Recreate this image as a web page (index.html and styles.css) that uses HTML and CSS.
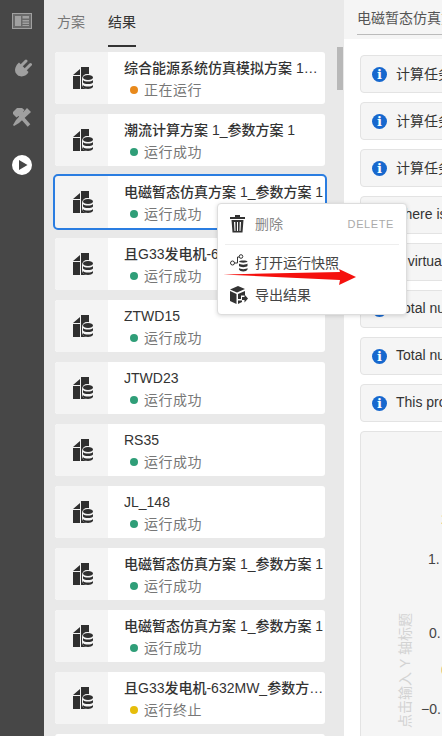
FILE: index.html
```html
<!DOCTYPE html>
<html lang="en">

<head>
    <meta charset="UTF-8">
    <meta name="viewport" content="width=device-width, initial-scale=1.0">
    <title>results</title>
    <link rel="stylesheet" href="styles.css">
</head>

<body>
    <svg class="defs" width="0" height="0">
        <symbol id="run-icon" viewBox="0 0 20 22">
            <path fill="#2f2f2f" d="M0 8 7 2V8zM0 9H7V22H0zM8 0H16V22H8z" />
            <rect x="9" y="7" width="11" height="15" rx="5" fill="#f4f4f4" />
            <path fill="#2f2f2f" d="M10 10.500C10 9 12 8 15 8S20 9 20 10.500 18 13 15 13 10 12 10 10.500zM10 13C11.500 15 18.500 15 20 13V15.500C18.500 17.500 11.500 17.500 10 15.500zM10 18C11.500 20 18.500 20 20 18V20C18.500 22.500 11.500 22.500 10 20z" />
        </symbol>
    </svg>

    <div id="app">
        <nav class="rail">
            <svg class="rail-icon" viewBox="0 0 20 16">
                <path fill="#6a6a6a" d="M0 0h20v16H0z" />
                <path fill-rule="evenodd" d="M0 0h20v16H0zM1 1v14h18V1zM3 3h6v10H3zM10.500 3H17v2.500h-6.500zM10.500 7H17v1.500h-6.500zM10.500 9.500H17V11h-6.500zM10.500 12H17v1h-6.500z" />
            </svg>
            <svg class="rail-icon" viewBox="0 0 20 20">
                <path d="M7 3.500 16.500 13C15 17 9 19 5.500 16 2 13 2 8 7 3.500z" />
                <path d="M10 6 14 2M14 10 18.500 5.500" stroke="#a0a0a0" stroke-width="3" stroke-linecap="round" fill="none" />
            </svg>
            <svg class="rail-icon" viewBox="0 0 20 20">
                <path d="M1 5 5 1H10L12.500 3 11 5 12 6.500 8 10.500 6.500 9 4.500 10.500 1 7z" />
                <path d="M9.500 10 17 18.500" stroke="#a0a0a0" stroke-width="3.500" fill="none" />
                <path d="M15 1 19 5 7 16 2 19 1 18 4 13z" />
            </svg>
            <svg class="rail-icon" viewBox="0 0 20 20">
                <path fill="#fff" fill-rule="evenodd" d="M10 0a10 10 0 1 1 0 20 10 10 0 0 1 0-20zM7 5v10l8.500-5z" />
            </svg>
        </nav>

        <section class="list-panel">
            <div class="tabs">
                <span class="tab">方案</span>
                <span class="tab tab-on">结果</span>
            </div>
            <div class="cards">
                <div class="card">
                    <div class="card-icon"><svg><use href="#run-icon" /></svg></div>
                    <div class="card-body">
                        <div class="card-title">综合能源系统仿真模拟方案 1_参数方案 1</div>
                        <div class="card-status"><i class="dot dot-running"></i>正在运行</div>
                    </div>
                </div>
                <div class="card">
                    <div class="card-icon"><svg><use href="#run-icon" /></svg></div>
                    <div class="card-body">
                        <div class="card-title">潮流计算方案 1_参数方案 1</div>
                        <div class="card-status"><i class="dot"></i>运行成功</div>
                    </div>
                </div>
                <div class="card card-on">
                    <div class="card-icon"><svg><use href="#run-icon" /></svg></div>
                    <div class="card-body">
                        <div class="card-title">电磁暂态仿真方案 1_参数方案 1</div>
                        <div class="card-status"><i class="dot"></i>运行成功</div>
                    </div>
                </div>
                <div class="card">
                    <div class="card-icon"><svg><use href="#run-icon" /></svg></div>
                    <div class="card-body">
                        <div class="card-title">且G33发电机-632MW_参数方案 1</div>
                        <div class="card-status"><i class="dot"></i>运行成功</div>
                    </div>
                </div>
                <div class="card">
                    <div class="card-icon"><svg><use href="#run-icon" /></svg></div>
                    <div class="card-body">
                        <div class="card-title card-plain">ZTWD15</div>
                        <div class="card-status"><i class="dot"></i>运行成功</div>
                    </div>
                </div>
                <div class="card">
                    <div class="card-icon"><svg><use href="#run-icon" /></svg></div>
                    <div class="card-body">
                        <div class="card-title card-plain">JTWD23</div>
                        <div class="card-status"><i class="dot"></i>运行成功</div>
                    </div>
                </div>
                <div class="card">
                    <div class="card-icon"><svg><use href="#run-icon" /></svg></div>
                    <div class="card-body">
                        <div class="card-title card-plain">RS35</div>
                        <div class="card-status"><i class="dot"></i>运行成功</div>
                    </div>
                </div>
                <div class="card">
                    <div class="card-icon"><svg><use href="#run-icon" /></svg></div>
                    <div class="card-body">
                        <div class="card-title card-plain">JL_148</div>
                        <div class="card-status"><i class="dot"></i>运行成功</div>
                    </div>
                </div>
                <div class="card">
                    <div class="card-icon"><svg><use href="#run-icon" /></svg></div>
                    <div class="card-body">
                        <div class="card-title">电磁暂态仿真方案 1_参数方案 1</div>
                        <div class="card-status"><i class="dot"></i>运行成功</div>
                    </div>
                </div>
                <div class="card">
                    <div class="card-icon"><svg><use href="#run-icon" /></svg></div>
                    <div class="card-body">
                        <div class="card-title">电磁暂态仿真方案 1_参数方案 1</div>
                        <div class="card-status"><i class="dot"></i>运行成功</div>
                    </div>
                </div>
                <div class="card">
                    <div class="card-icon"><svg><use href="#run-icon" /></svg></div>
                    <div class="card-body">
                        <div class="card-title">且G33发电机-632MW_参数方案 1</div>
                        <div class="card-status"><i class="dot dot-stopped"></i>运行终止</div>
                    </div>
                </div>
                <div class="card"></div>
            </div>
            <div class="scrollbar"></div>
        </section>

        <section class="detail">
            <div class="detail-head">
                <div class="detail-title">电磁暂态仿真方案 1_参数方案 1</div>
            </div>
            <div class="detail-body">
                <div class="alert"><span class="info">i</span>计算任务已提交到计算节点</div>
                <div class="alert"><span class="info">i</span>计算任务已开始运行计算</div>
                <div class="alert"><span class="info">i</span>计算任务运行结束</div>
                <div class="alert"><span class="info">i</span>There is 1 node</div>
                <div class="alert"><span class="info">i</span>a virtual node</div>
                <div class="alert"><span class="info">i</span>Total number of</div>
                <div class="alert"><span class="info">i</span>Total number of</div>
                <div class="alert"><span class="info">i</span>This process</div>
                <div class="chart">
                    <span class="tick tick-a">2</span>
                    <span class="tick tick-b">1.</span>
                    <span class="tick tick-c">0.</span>
                    <span class="tick tick-d">0</span>
                    <span class="tick tick-e">−0.</span>
                    <span class="axis-title">点击输入 Y 轴标题</span>
                </div>
            </div>
        </section>

        <div class="menu">
            <div class="menu-item">
                <svg class="menu-icon" viewBox="0 0 18 18">
                    <path fill-rule="evenodd" d="M0 2H15V4H0zM5 0H10V2H5zM1.500 5H13.500L12.500 17.500H2.500zM4 7 4.500 16H5.500L5.300 7zM7 7V16H8V7zM9.700 7 9.500 16H10.500L11 7z" />
                </svg>
                <span class="menu-label menu-dim">删除</span>
                <span class="menu-key">DELETE</span>
            </div>
            <div class="menu-line"></div>
            <div class="menu-item">
                <svg class="menu-icon" viewBox="0 0 18 18">
                    <circle cx="2.500" cy="9" r="2" fill="none" stroke="#333" />
                    <path d="M4.500 9H7.500M7.500 9V3H9.500" fill="none" stroke="#333" />
                    <circle cx="11" cy="2.500" r="1.800" fill="none" stroke="#333" />
                    <path d="M9 7.500C9 6 17.500 6 17.500 7.500S9 9 9 7.500zM9 9.500C10 11 16.500 11 17.500 9.500V12C16.500 13.500 10 13.500 9 12zM9 14C10 15.500 16.500 15.500 17.500 14V15.500C16.500 18 10 18 9 15.500z" />
                </svg>
                <span class="menu-label">打开运行快照</span>
            </div>
            <div class="menu-item">
                <svg class="menu-icon" viewBox="0 0 18 18">
                    <path d="M8 0 15 3 7 6.500 0 3.500zM0 5 6.500 8V18L0 15zM8 8 15 5V9.500H11V13H8zM12 11H14.500V8.500L18 12.500 14.500 16.500V14H12zM8 14.500H12V16L8 18z" />
                </svg>
                <span class="menu-label">导出结果</span>
            </div>
        </div>

        <svg class="arrow" viewBox="0 0 136 24">
            <path fill="#f5110e" d="M1 11.500 118 9 117 6 134 14 117 22 118 17z" />
        </svg>
    </div>
</body>

</html>
```

FILE: styles.css
```css
* {
    margin: 0;
    padding: 0;
    box-sizing: border-box;
    font-family: "Liberation Sans", "Noto Sans CJK SC", sans-serif;
}

body {
    overflow: hidden;
}

.defs {
    display: block;
}

#app {
    position: relative;
    display: flex;
    width: 442px;
    height: 736px;
    overflow: hidden;
}

.rail {
    flex: none;
    width: 44px;
    display: flex;
    flex-direction: column;
    align-items: center;
    gap: 28px;
    padding-top: 11px;
    background-color: #474747;
}

.rail-icon {
    width: 20px;
    height: 20px;
    fill: #a0a0a0;
}

.list-panel {
    flex: none;
    position: relative;
    width: 300px;
    background-color: #e9e9e9;
}

.tabs {
    display: flex;
    gap: 23px;
    height: 47px;
    padding-left: 13px;
}

.tab {
    width: 28px;
    height: 47px;
    padding-top: 12px;
    font-size: 14px;
    line-height: 20px;
    color: #777;
}

.tab-on {
    color: #333;
    border-bottom: 2px solid #333;
}

.cards {
    display: flex;
    flex-direction: column;
    gap: 10px;
    padding: 5px 0 0 11px;
}

.card {
    display: flex;
    flex: none;
    width: 270px;
    height: 52px;
    border-radius: 3px;
    background-color: #fff;
    overflow: hidden;
}

.card-on {
    outline: 2px solid #2a7de1;
    outline-offset: 0;
}

.card-icon {
    flex: none;
    display: flex;
    align-items: center;
    justify-content: center;
    width: 53px;
    padding-left: 3px;
    background-color: #f4f4f4;
}

.card-icon svg {
    width: 20px;
    height: 22px;
}

.card-body {
    flex: 1;
    min-width: 0;
    padding: 6px 0 0 17px;
}

.card-title {
    height: 20px;
    margin-left: -1px;
    font-size: 14px;
    line-height: 20px;
    font-weight: 500;
    color: #333;
    white-space: nowrap;
    overflow: hidden;
    text-overflow: ellipsis;
}

.card-plain {
    font-weight: 400;
}

.card-status {
    display: flex;
    align-items: center;
    margin-top: 2px;
    padding-left: 5px;
    font-size: 14px;
    line-height: 20px;
    letter-spacing: .5px;
    color: #777;
}

.dot {
    width: 8px;
    height: 8px;
    margin-right: 6px;
    border-radius: 50%;
    background-color: #2f9e78;
}

.dot-running {
    background-color: #e8891c;
}

.dot-stopped {
    background-color: #e6bd0a;
}

.scrollbar {
    position: absolute;
    top: 47px;
    right: 1px;
    width: 6px;
    height: 43px;
    background-color: #b8b8b8;
}

.detail {
    flex: 1;
    min-width: 0;
    background-color: #fff;
}

.detail-head {
    height: 39px;
    padding-left: 13px;
    background-color: #f5f5f5;
}

.detail-title {
    width: 300px;
    height: 35px;
    padding-top: 8px;
    font-size: 14px;
    line-height: 20px;
    color: #555;
    white-space: nowrap;
    border-bottom: 1px solid #bbb;
}

.detail-body {
    display: flex;
    flex-direction: column;
    gap: 9px;
    width: 360px;
    padding: 16px 0 0 16px;
}

.alert {
    display: flex;
    align-items: center;
    gap: 9px;
    height: 38px;
    padding: 0 0 2px 11px;
    border: 1px solid #e3e3e3;
    border-radius: 4px;
    background-color: #f5f5f5;
    font-size: 14px;
    color: #333;
    white-space: nowrap;
}

.info {
    flex: none;
    width: 15px;
    height: 15px;
    margin-top: 3px;
    border-radius: 50%;
    background-color: #1768ce;
    color: #fff;
    font-size: 13px;
    line-height: 15px;
    font-weight: 700;
    font-family: "DejaVu Serif", serif;
    text-align: center;
}

.chart {
    position: relative;
    height: 320px;
    border: 1px solid #e3e3e3;
    border-radius: 4px;
    background-color: #f5f5f5;
}

.tick {
    position: absolute;
    font-size: 14px;
    line-height: 16px;
    color: #444;
    white-space: nowrap;
}

.tick-a {
    top: 79px;
    left: 80px;
    color: #c9a86a;
}

.tick-b {
    top: 119px;
    left: 67px;
}

.tick-c {
    top: 193px;
    left: 68px;
}

.tick-d {
    top: 230px;
    left: 80px;
    color: #c9a86a;
}

.tick-e {
    top: 269px;
    left: 60px;
}

.axis-title {
    position: absolute;
    top: 181px;
    left: 36px;
    writing-mode: vertical-rl;
    text-orientation: sideways;
    transform: rotate(180deg);
    font-size: 14px;
    line-height: 16px;
    color: #d3d3d3;
    white-space: nowrap;
}

.menu {
    position: absolute;
    top: 203px;
    left: 217px;
    width: 190px;
    height: 112px;
    padding: 4px 7px;
    border: 1px solid #ddd;
    border-radius: 4px;
    background-color: #fff;
    box-shadow: 0 1px 4px rgba(0, 0, 0, .15);
}

.menu-item {
    display: flex;
    align-items: center;
    gap: 7px;
    height: 32px;
    padding: 0 5px;
    font-size: 14px;
    color: #444;
}

.menu-icon {
    flex: none;
    width: 18px;
    height: 18px;
    fill: #333;
}

.menu-label {
    flex: 1;
    padding-bottom: 2px;
}

.menu-dim {
    color: #888;
}

.menu-key {
    font-size: 11px;
    letter-spacing: .6px;
    color: #aaa;
}

.menu-line {
    height: 1px;
    margin: 4px 0 2px;
    background-color: #eee;
}

.arrow {
    position: absolute;
    top: 263px;
    left: 222px;
    width: 136px;
    height: 24px;
}
```
